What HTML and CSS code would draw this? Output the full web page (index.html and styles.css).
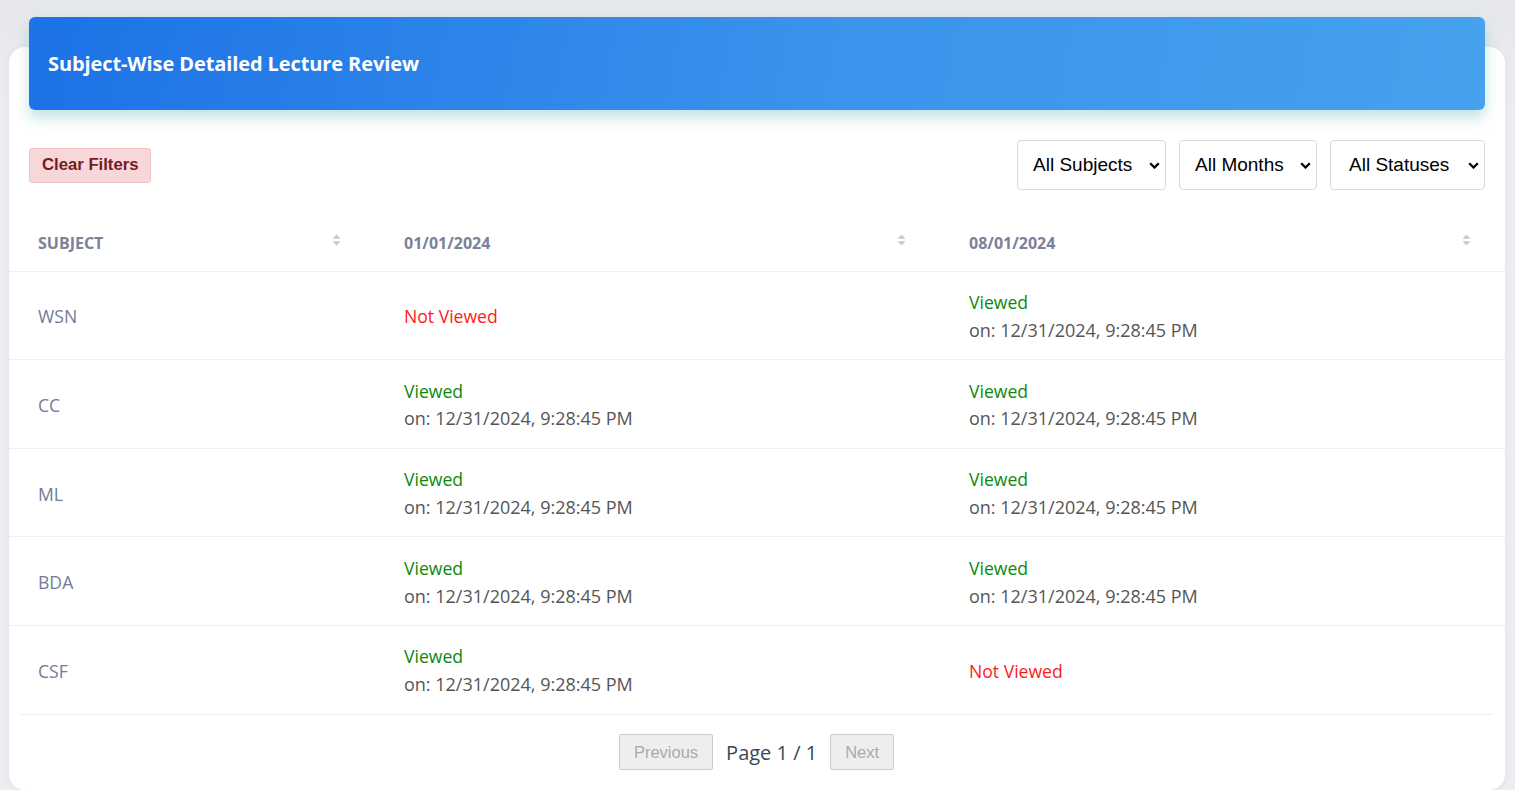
FILE: index.html
```html
<!DOCTYPE html>
<html lang="en">
<head>
<meta charset="utf-8">
<title>Subject-Wise Detailed Lecture Review</title>
<link rel="stylesheet" href="styles.css">
</head>
<body>
<div class="page">
  <div class="card">
    <div class="banner">
      <h1 class="banner-title">Subject-Wise Detailed Lecture Review</h1>
    </div>
    <div class="filters">
      <button class="btn-clear">Clear Filters</button>
      <div class="selects">
        <div class="select-box"><span>All Subjects</span><svg class="chev" viewBox="0 0 11 7" width="11" height="7"><path d="M1.2 1.2l4.3 4.3 4.3-4.3" fill="none" stroke="#000" stroke-width="2.3"/></svg></div>
        <div class="select-box"><span>All Months</span><svg class="chev" viewBox="0 0 11 7" width="11" height="7"><path d="M1.2 1.2l4.3 4.3 4.3-4.3" fill="none" stroke="#000" stroke-width="2.3"/></svg></div>
        <div class="select-box"><span>All Statuses</span><svg class="chev" viewBox="0 0 11 7" width="11" height="7"><path d="M1.2 1.2l4.3 4.3 4.3-4.3" fill="none" stroke="#000" stroke-width="2.3"/></svg></div>
      </div>
    </div>
    <table class="grid">
      <colgroup><col class="c1"><col class="c2"><col class="c3"></colgroup>
      <thead>
        <tr>
          <th><div class="th-in"><span>Subject</span><svg class="sort" viewBox="0 0 9 12" width="9" height="12"><path d="M4.5 0.5L8.5 4.8H0.5Z" fill="#c6c8d4"/><path d="M4.5 11.5L8.5 7.2H0.5Z" fill="#c6c8d4"/></svg></div></th>
          <th><div class="th-in"><span>01/01/2024</span><svg class="sort" viewBox="0 0 9 12" width="9" height="12"><path d="M4.5 0.5L8.5 4.8H0.5Z" fill="#c6c8d4"/><path d="M4.5 11.5L8.5 7.2H0.5Z" fill="#c6c8d4"/></svg></div></th>
          <th><div class="th-in"><span>08/01/2024</span><svg class="sort" viewBox="0 0 9 12" width="9" height="12"><path d="M4.5 0.5L8.5 4.8H0.5Z" fill="#c6c8d4"/><path d="M4.5 11.5L8.5 7.2H0.5Z" fill="#c6c8d4"/></svg></div></th>
        </tr>
      </thead>
      <tbody>
        <tr>
          <td class="subj">WSN</td>
          <td><span class="no">Not Viewed</span></td>
          <td><span class="yes">Viewed</span><span class="on">on: 12/31/2024, 9:28:45 PM</span></td>
        </tr>
        <tr>
          <td class="subj">CC</td>
          <td><span class="yes">Viewed</span><span class="on">on: 12/31/2024, 9:28:45 PM</span></td>
          <td><span class="yes">Viewed</span><span class="on">on: 12/31/2024, 9:28:45 PM</span></td>
        </tr>
        <tr>
          <td class="subj">ML</td>
          <td><span class="yes">Viewed</span><span class="on">on: 12/31/2024, 9:28:45 PM</span></td>
          <td><span class="yes">Viewed</span><span class="on">on: 12/31/2024, 9:28:45 PM</span></td>
        </tr>
        <tr>
          <td class="subj">BDA</td>
          <td><span class="yes">Viewed</span><span class="on">on: 12/31/2024, 9:28:45 PM</span></td>
          <td><span class="yes">Viewed</span><span class="on">on: 12/31/2024, 9:28:45 PM</span></td>
        </tr>
        <tr>
          <td class="subj">CSF</td>
          <td><span class="yes">Viewed</span><span class="on">on: 12/31/2024, 9:28:45 PM</span></td>
          <td><span class="no">Not Viewed</span></td>
        </tr>
      </tbody>
    </table>
    <div class="pager">
      <button class="pbtn" disabled>Previous</button>
      <span class="pinfo">Page 1 / 1</span>
      <button class="pbtn" disabled>Next</button>
    </div>
  </div>
</div>
</body>
</html>
```
FILE: styles.css
```css
html, body {
  margin: 0;
  padding: 0;
}
body {
  background: linear-gradient(to bottom, #e6e7ea 0px, #eceef2 120px, #eceef2 100%);
  font-family: "Open Sans", "Noto Sans", sans-serif;
  height: 790px;
  overflow: hidden;
}
.page {
  padding: 47px 10px 0 9px;
}
.card {
  display: flow-root;
  background: #fff;
  border-radius: 16px;
  box-shadow: 0 2px 10px rgba(0, 0, 0, 0.05);
  padding-bottom: 20px;
}
.banner {
  margin: -30px 20px 0 20px;
  height: 93px;
  border-radius: 6px;
  background: linear-gradient(100deg, #1c72e6 0%, #3b93ec 55%, #46a1ee 100%);
  box-shadow: 0 8px 14px rgba(40, 150, 160, 0.28);
  display: flex;
  align-items: center;
  padding: 0 19px;
}
.banner-title {
  margin: 0;
  color: #fff;
  font-size: 20px;
  font-weight: 700;
  letter-spacing: -0.1px;
}
.filters {
  display: flex;
  justify-content: space-between;
  align-items: center;
  padding: 30px 20px 0 20px;
}
.btn-clear {
  background: #f8d7da;
  border: 1px solid #f5c2c7;
  color: #721c24;
  font-family: "Liberation Sans", Arial, sans-serif;
  font-weight: 700;
  font-size: 16.7px;
  height: 35px;
  padding: 0 12px;
  border-radius: 3px;
}
.selects {
  display: flex;
  gap: 13px;
}
.select-box {
  height: 50px;
  box-sizing: border-box;
  border: 1px solid #d9d9d9;
  border-radius: 4px;
  display: flex;
  align-items: center;
  gap: 12px;
  padding: 0 5px 0 15px;
  font-family: "Liberation Sans", Arial, sans-serif;
  font-size: 19px;
  color: #000;
}
.select-box:nth-child(1) { width: 149px; }
.select-box:nth-child(2) { width: 138px; }
.select-box:nth-child(3) { width: 155px; padding-left: 18px; }
.select-box span { flex: 1; white-space: nowrap; }
.chev { flex: none; margin-top: 1px; }
.grid {
  width: 100%;
  border-collapse: collapse;
  table-layout: fixed;
  margin-top: 25px;
}
.c1 { width: 366px; }
.c2 { width: 565px; }
.c3 { width: 565px; }
.grid th {
  text-align: left;
  padding: 14px 0 0 29px;
  height: 56px;
  box-sizing: border-box;
  vertical-align: top;
  border-bottom: 1px solid #eeeff2;
}
.th-in {
  display: flex;
  justify-content: space-between;
  align-items: center;
  padding-right: 34px;
}
.th-in span {
  font-size: 16px;
  font-weight: 700;
  color: #7c8199;
  text-transform: uppercase;
  line-height: 24px;
  padding-top: 2px;
}
.sort { margin-top: -4px; }
.grid td {
  padding: 18px 0 14px 29px;
  font-size: 17.6px;
  line-height: 27.8px;
  vertical-align: middle;
  border-bottom: 1px solid #eeeff2;
  height: 55.6px;
}
.grid tbody tr:last-child td { border-bottom: none; }
.subj { color: #737a9a; }
.yes { color: #0a8a0a; display: block; margin-top: -1px; }
.no { color: #ff1a1a; display: block; }
.on { color: #555; font-size: 18px; display: block; }
.pager {
  margin: 1px 12px 0 11px;
  border-top: 1px solid #eeeff2;
  padding-top: 19px;
  display: flex;
  justify-content: center;
  align-items: center;
  gap: 13px;
}
.pbtn {
  background: #eee;
  border: 1px solid #ccc;
  color: #aaa;
  font-family: "Liberation Sans", Arial, sans-serif;
  font-size: 16.5px;
  height: 36px;
  padding: 0 14px;
  border-radius: 2px;
}
.pinfo {
  font-size: 20px;
  color: #34495e;
}
```
